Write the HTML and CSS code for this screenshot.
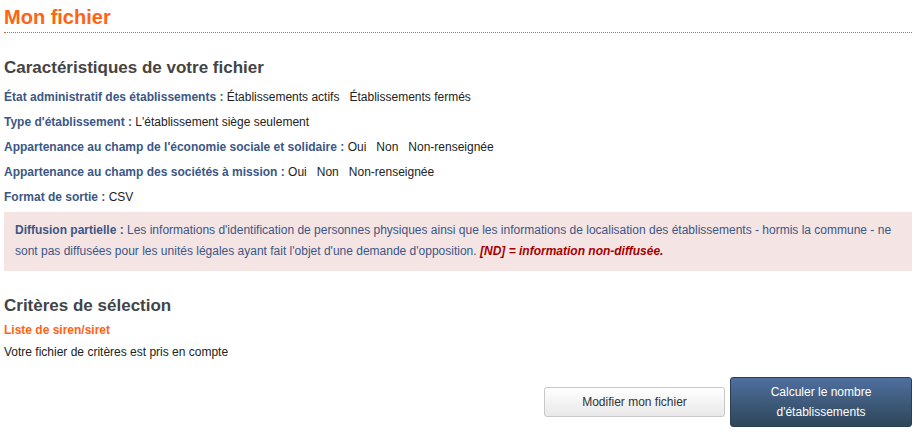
FILE: index.html
```html
<!doctype html>
<html lang="fr">
  <head>
    <meta charset="UTF-8" />
    <meta name="viewport" content="width=device-width, initial-scale=1.0" />
    <title>Mon fichier</title>
    <link rel="stylesheet" href="styles.css">
  </head>
  <body>
    <div class="page">
      <h1 class="page-title">Mon fichier</h1>

      <h2 class="section-title">Caractéristiques de votre fichier</h2>
      <div class="info-row">
        <span class="label">État administratif des établissements :</span>
        Établissements actifs &nbsp; Établissements fermés
      </div>
      <div class="info-row">
        <span class="label">Type d'établissement :</span>
        L'établissement siège seulement
      </div>
      <div class="info-row">
        <span class="label">Appartenance au champ de l'économie sociale et solidaire :</span>
        Oui &nbsp; Non &nbsp; Non-renseignée
      </div>
      <div class="info-row">
        <span class="label">Appartenance au champ des sociétés à mission :</span>
        Oui &nbsp; Non &nbsp; Non-renseignée
      </div>
      <div class="info-row">
        <span class="label">Format de sortie :</span>
        CSV
      </div>

      <div class="notice">
        <span class="label">Diffusion partielle :</span>
        Les informations d'identification de personnes physiques ainsi que les informations de localisation des établissements - hormis la commune - ne sont pas diffusées pour les unités légales ayant fait l'objet d'une demande d'opposition.
        <em class="nd">[ND] = information non-diffusée.</em>
      </div>

      <h2 class="section-title criteria">Critères de sélection</h2>
      <div class="sub-title">Liste de siren/siret</div>
      <div class="plain">Votre fichier de critères est pris en compte</div>

      <div class="actions">
        <button class="btn btn-light">Modifier mon fichier</button>
        <button class="btn btn-dark">Calculer le nombre<br>d'établissements</button>
      </div>
    </div>
  </body>
</html>
```

FILE: styles.css
```css
* {
  margin: 0;
  padding: 0;
  box-sizing: border-box;
}

body {
  font-family: "Liberation Sans", Arial, sans-serif;
  font-size: 12px;
  color: #222222;
  background: #ffffff;
}

.page {
  padding: 5px 8px 0 4px;
}

.page-title {
  font-size: 20px;
  font-weight: bold;
  color: #ff6314;
  line-height: 24px;
  padding-bottom: 3px;
  border-bottom: 1px dotted #e8641e;
}

.section-title {
  font-size: 17px;
  font-weight: bold;
  color: #444444;
  line-height: 20px;
  margin-top: 25px;
  margin-bottom: 7px;
}

.info-row {
  line-height: 25px;
  color: #222222;
}

.label {
  font-weight: bold;
  color: #3b5785;
}

.notice {
  margin-top: 2px;
  background: #f5e4e4;
  color: #3b5785;
  line-height: 21px;
  padding: 8px 11px 9px;
}

.nd {
  color: #a50000;
  font-weight: bold;
}

.criteria {
  margin-top: 25px;
  margin-bottom: 4px;
}

.sub-title {
  color: #ff6314;
  font-weight: bold;
  line-height: 20px;
}

.plain {
  line-height: 25px;
}

.actions {
  display: flex;
  justify-content: flex-end;
  align-items: center;
  gap: 5px;
  margin-top: 12px;
}

.btn {
  font-family: "Liberation Sans", Arial, sans-serif;
  font-size: 12px;
  border-radius: 3px;
  cursor: pointer;
}

.btn-light {
  width: 181px;
  height: 30px;
  color: #333333;
  background: linear-gradient(#ffffff, #e8e8e8);
  border: 1px solid #c8c8c8;
}

.btn-dark {
  width: 182px;
  height: 50px;
  line-height: 20px;
  color: #ffffff;
  background: linear-gradient(#4f6f9f, #2e4658);
  border: 1px solid #2c3f52;
}
```
